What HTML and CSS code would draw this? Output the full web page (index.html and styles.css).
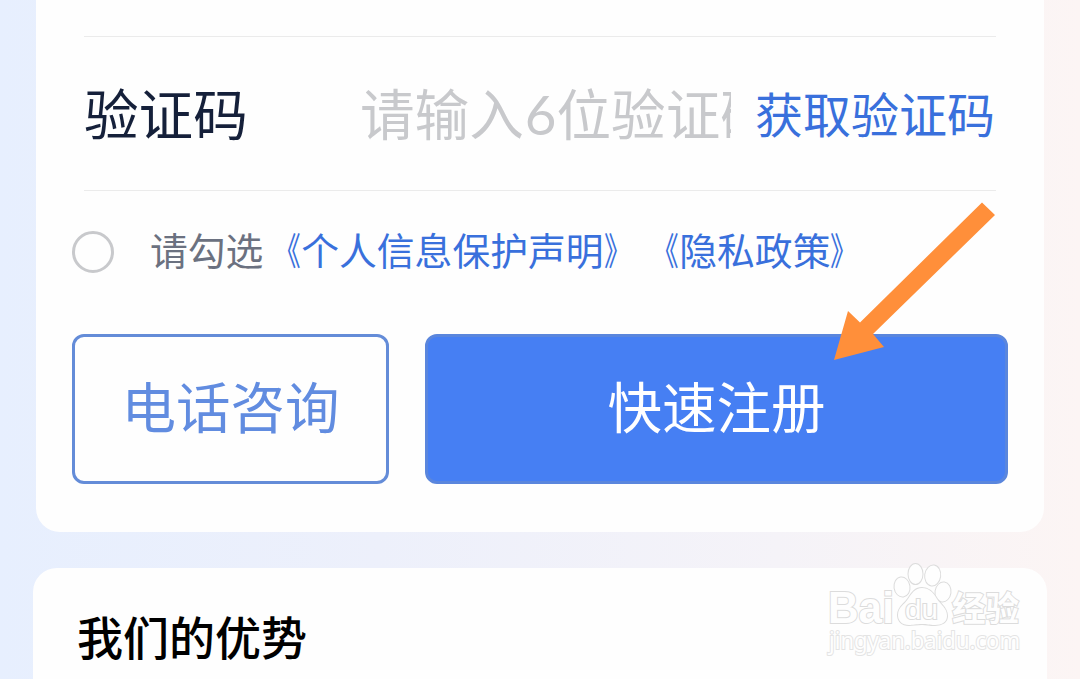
FILE: index.html
```html
<!DOCTYPE html>
<html lang="zh-CN">
<head>
    <meta charset="UTF-8">
    <meta name="viewport" content="width=device-width, initial-scale=1.0">
    <title>快速注册</title>
    <link rel="stylesheet" href="styles.css">
</head>
<body>
    <div class="card form-card">
        <div class="form-row">
            <label class="label">验证码</label>
            <div class="code-input">请输入<span class="digit">6</span>位验证码</div>
            <a class="get-code">获取验证码</a>
        </div>

        <div class="agreement">
            <span class="radio"></span>
            <p class="agreement-text">请勾选<a><span class="open">《</span>个人信息保护声明<span class="close">》</span></a><a><span class="open">《</span>隐私政策<span class="close">》</span></a></p>
        </div>

        <div class="buttons">
            <button class="btn btn-phone">电话咨询</button>
            <button class="btn btn-register">快速注册</button>
        </div>
    </div>

    <div class="card advantage-card">
        <h2>我们的优势</h2>
    </div>

    <!-- 箭头 -->
    <svg class="arrow" width="162" height="160" viewBox="0 0 162 160">
        <path d="M148 2.5L161 15L39 134L50 147L0 160L14 111L26 122.500Z" fill="#ff8f3a"/>
    </svg>

    <!-- 水印 -->
    <svg class="watermark" width="200" height="106" viewBox="0 0 200 106">
        <text class="wm-bai" x="4" y="63" textLength="66" lengthAdjust="spacingAndGlyphs">Bai</text>
        <g class="paw">
            <ellipse cx="78" cy="27" rx="7.500" ry="9.500" transform="rotate(-8 78 27)"/>
            <ellipse cx="91.500" cy="14" rx="7" ry="10"/>
            <ellipse cx="108.700" cy="15.500" rx="7.500" ry="10" transform="rotate(8 108.700 15.500)"/>
            <ellipse cx="119" cy="32" rx="7.500" ry="9.500" transform="rotate(8 119 32)"/>
            <path d="M98 28C105 28 109 32 113 39C117 45 123 48 123 56C123 62 118 65 111 65C105 65 103 64 98 64C92 64 89 65 85 65C78 65 74 61 74 55C74 47 80 45 84 39C88 33 91 28 98 28Z"/>
        </g>
        <text class="wm-du" x="81" y="59" textLength="33" lengthAdjust="spacingAndGlyphs">du</text>
        <text class="wm-cn" x="128" y="61" textLength="67" lengthAdjust="spacingAndGlyphs">经验</text>
        <text class="wm-url" x="5" y="89" textLength="191" lengthAdjust="spacingAndGlyphs">jingyan.baidu.com</text>
    </svg>
</body>
</html>
```
FILE: styles.css
```css
* {
    box-sizing: border-box;
}
body {
    font-family: "Noto Sans CJK SC", sans-serif;
    background: linear-gradient(90deg, #e7effe 0%, #edf0fb 35%, #f5f3f8 72%, #fcf5f4 100%);
    margin: 0;
    height: 679px;
    overflow: hidden;
    position: relative;
}
.card {
    background-color: #fefefe;
}
.form-card {
    margin: 0 36px;
    height: 532px;
    padding: 36px 36px 0;
    border-radius: 0 0 24px 24px;
}
.form-row {
    display: flex;
    align-items: center;
    height: 155px;
    margin: 0 12px;
    padding-bottom: 4px;
    border-top: 1px solid #ebebeb;
    border-bottom: 1px solid #ebebeb;
}
.label {
    width: 276px;
    color: #15203a;
    font-size: 54.6px;
    line-height: 80px;
}
.code-input {
    width: 371px;
    overflow: hidden;
    white-space: nowrap;
    color: #c8c9cc;
    font-size: 54.6px;
    line-height: 80px;
}
.digit {
    padding-left: 1px;
    font-family: Lato, sans-serif;
    line-height: 1;
}
.get-code {
    margin-left: 24px;
    white-space: nowrap;
    color: #3970dc;
    font-size: 48px;
    line-height: 80px;
}
.agreement {
    display: flex;
    align-items: center;
    height: 122px;
}
.radio {
    width: 42px;
    height: 42px;
    border: 3px solid #c8c9cc;
    border-radius: 50%;
}
.agreement-text {
    margin: 0 0 0 36px;
    padding-bottom: 8px;
    white-space: nowrap;
    color: #6b7180;
    font-size: 37.8px;
    text-spacing-trim: space-all;
}
.agreement-text a {
    color: #3970dc;
}
.open,
.close {
    display: inline-block;
    transform: scaleX(0.72);
}
.open {
    transform-origin: right center;
}
.close {
    transform-origin: left center;
}
.buttons {
    display: flex;
    gap: 36px;
    margin-top: 21px;
}
.btn {
    height: 150px;
    padding: 0 0 9px;
    border: 3px solid #648cd8;
    border-radius: 12px;
    font-family: inherit;
    font-size: 54.5px;
}
.btn-phone {
    width: 317px;
    background-color: #fefefe;
    color: #618ce0;
}
.btn-register {
    width: 583px;
    background-color: #467ff3;
    border-color: #5a86dd;
    color: #fff;
}
.advantage-card {
    margin: 36px 33px 0;
    height: 140px;
    padding: 33px 44px;
    border-radius: 24px 24px 0 0;
}
.advantage-card h2 {
    margin: 0;
    color: #000;
    font-size: 46px;
    font-weight: 500;
    line-height: 68px;
}
.arrow {
    position: absolute;
    left: 834px;
    top: 200px;
}
.watermark {
    position: absolute;
    left: 824px;
    top: 560px;
}
.watermark text,
.paw {
    fill: #fefefe;
    stroke: #dcdcdc;
    stroke-width: 2;
    paint-order: stroke;
}
.wm-bai {
    font: bold 44px "Liberation Sans", sans-serif;
}
.wm-du {
    font: 27px "Liberation Sans", sans-serif;
}
.wm-cn {
    font: bold 34px "Noto Sans CJK SC", sans-serif;
}
.watermark .wm-url {
    font: 23px "Noto Sans", sans-serif;
    stroke: #e4e4e4;
}
```
